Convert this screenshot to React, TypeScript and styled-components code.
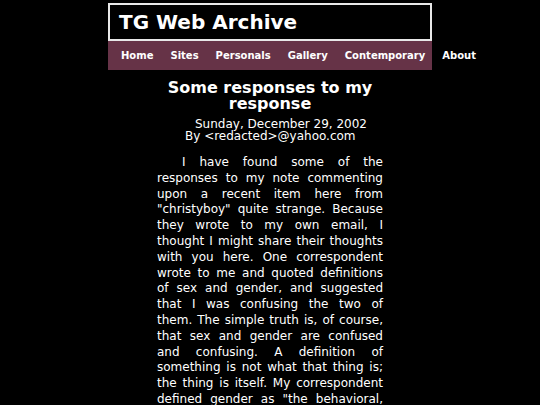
import React from "react";
import styled, { createGlobalStyle } from "styled-components";

const Global = createGlobalStyle`
  html, body { margin: 0; padding: 0; background: #000; }
  body { font-family: "DejaVu Sans", Verdana, sans-serif; color: #fff; }
`;

const Page = styled.div`
  width: 540px;
  display: flex;
  flex-direction: column;
  align-items: center;
  padding-top: 3px;
`;

const Header = styled.div`
  width: 324px;
  box-sizing: border-box;
  border: 2px solid #e8e8e8;
  background: #000;
  height: 38px;
  display: flex;
  align-items: center;
  padding-left: 9px;
`;

const SiteTitle = styled.h1`
  margin: 0;
  font-size: 20px;
  font-weight: bold;
  color: #fff;
  line-height: 1;
`;

const Nav = styled.nav`
  width: 324px;
  height: 29px;
  background: #663347;
  display: flex;
  align-items: center;
  gap: 17px;
  padding-left: 13px;
  box-sizing: border-box;
  white-space: nowrap;
  overflow: visible;
`;

const NavLink = styled.a`
  font-size: 10px;
  font-weight: bold;
  color: #fff;
  text-decoration: none;
  flex: none;
`;

const Column = styled.div`
  width: 226px;
  display: flex;
  flex-direction: column;
  margin-top: 9.5px;
`;

const Title = styled.h2`
  margin: 0;
  font-size: 16px;
  font-weight: bold;
  text-align: center;
  line-height: 16px;
`;

const DateLine = styled.div`
  font-size: 12px;
  line-height: 11px;
  margin-top: 7.5px;
  padding-left: 38px;
`;

const ByLine = styled.div`
  font-size: 12px;
  line-height: 12px;
  padding-left: 28px;
`;

const Body = styled.p`
  margin: 13px 0 0;
  font-size: 12px;
  line-height: 15.8px;
  text-align: justify;
  text-indent: 25px;
  word-spacing: 0.5px;
`;

const links = ["Home", "Sites", "Personals", "Gallery", "Contemporary", "About"];

export default function App() {
  return (
    <Page>
      <Global />
      <Header>
        <SiteTitle>TG Web Archive</SiteTitle>
      </Header>
      <Nav>
        {links.map((l) => (
          <NavLink key={l} href="#">{l}</NavLink>
        ))}
      </Nav>
      <Column>
        <Title>Some responses to my response</Title>
        <DateLine>Sunday, December 29, 2002</DateLine>
        <ByLine>By &lt;redacted&gt;@yahoo.com</ByLine>
        <Body>
          I have found some of the responses to my note commenting upon a recent item here from
          "christyboy" quite strange. Because they wrote to my own email, I thought I might share
          their thoughts with you here. One correspondent wrote to me and quoted definitions of sex
          and gender, and suggested that I was confusing the two of them. The simple truth is, of
          course, that sex and gender are confused and confusing. A definition of something is not
          what that thing is; the thing is itself. My correspondent defined gender as "the
          behavioral, cultural, or psychological traits typically associated with one sex."
        </Body>
      </Column>
    </Page>
  );
}
